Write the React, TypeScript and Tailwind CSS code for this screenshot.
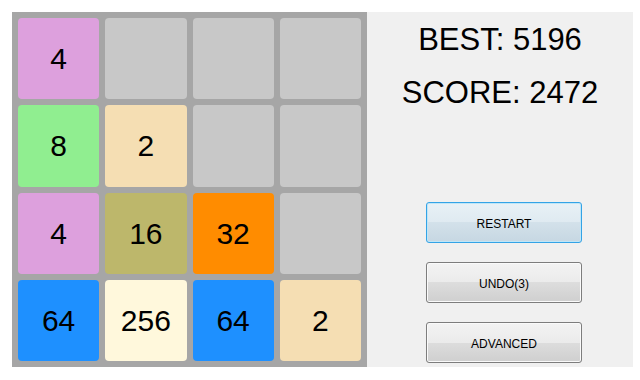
import React from 'react';

const tiles: (number | null)[] = [
  4, null, null, null,
  8, 2, null, null,
  4, 16, 32, null,
  64, 256, 64, 2,
];

const tileColor: Record<number, string> = {
  2: 'bg-[#f5deb3]',
  4: 'bg-[#dda0dd]',
  8: 'bg-[#90ee90]',
  16: 'bg-[#bdb76b]',
  32: 'bg-[#ff8c00]',
  64: 'bg-[#1e90ff]',
  256: 'bg-[#fff8dc]',
};

function Tile({ value }: { value: number | null }) {
  const color = value ? tileColor[value] : 'bg-[#c8c8c8]';
  return (
    <div className={`${color} rounded-[4px] flex items-center justify-center text-[30px] text-black`}>
      {value ?? ''}
    </div>
  );
}

function WinButton({ label, focused }: { label: string; focused?: boolean }) {
  const cls = focused
    ? 'border-[#33a3e6] bg-[linear-gradient(to_bottom,#e8f1f6_0%,#dfeaf1_50%,#d3e1ea_50%,#c6d7e2_100%)] shadow-[inset_0_0_0_1px_#bfe6f8]'
    : 'border-[#7d7d7d] bg-[linear-gradient(to_bottom,#f3f3f3_0%,#ebebeb_50%,#dddddd_50%,#cfcfcf_100%)] shadow-[inset_0_0_0_1px_#fafafa]';
  return (
    <button className={`w-[156px] h-[41px] rounded-[3px] border ${cls} text-[12px] text-black flex items-center justify-center pt-[3px]`}>
      {label}
    </button>
  );
}

export default function App() {
  return (
    <div className="w-[640px] h-[380px] bg-white pt-[12px] pl-[12px]" style={{ fontFamily: '"Liberation Sans", Arial, sans-serif' }}>
      <div className="flex w-[621px] h-[355px]">
        {/* Board */}
        <div className="w-[355px] h-[355px] bg-[#a6a6a6] p-[6px] grid grid-cols-4 grid-rows-4 gap-[6px]">
          {tiles.map((t, i) => (
            <Tile key={i} value={t} />
          ))}
        </div>

        {/* Side panel */}
        <div className="flex-1 bg-[#f0f0f0] flex flex-col">
          <div className="mt-[11px] text-center text-[31px] leading-[34px] text-black">BEST: 5196</div>
          <div className="mt-[19px] text-center text-[31px] leading-[34px] text-black">SCORE: 2472</div>
          <div className="mt-[92px] pl-[59px] flex flex-col gap-[19px]">
            <WinButton label="RESTART" focused />
            <WinButton label="UNDO(3)" />
            <WinButton label="ADVANCED" />
          </div>
        </div>
      </div>
    </div>
  );
}
